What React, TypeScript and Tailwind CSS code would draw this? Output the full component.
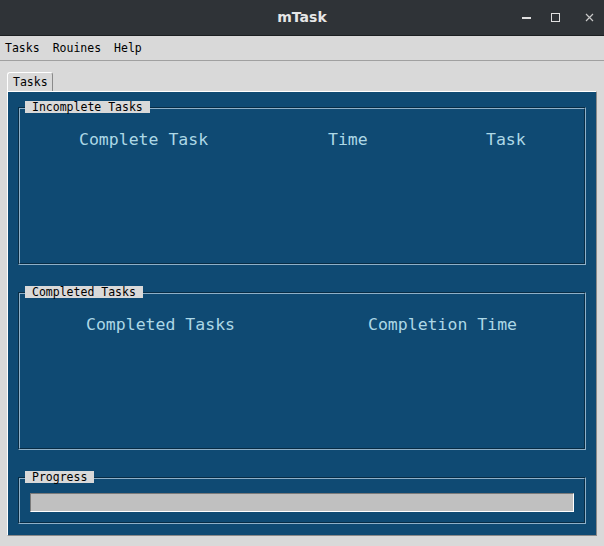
import type { ReactNode } from "react";

const mono = { fontFamily: '"DejaVu Sans Mono", "Liberation Mono", monospace' };

function Group({ label, className, children }: { label: string; className?: string; children?: ReactNode }) {
  // Tk-style groove frame with the label sitting on the top edge
  return (
    <div className={"relative border border-t-[#082c44] border-l-[#082c44] border-r-[#8fb0c8] border-b-[#8fb0c8] " + (className ?? "")}>
      <div className="absolute inset-0 border border-t-[#8fb0c8] border-l-[#8fb0c8] border-r-[#082c44] border-b-[#082c44] pointer-events-none" />
      <div
        className="absolute -top-[7px] left-[6px] h-[12px] bg-[#d9d9d9] px-[7px] text-[11.5px] leading-[12px] text-black"
        style={mono}
      >
        {label}
      </div>
      {children}
    </div>
  );
}

export default function App() {
  return (
    <div className="w-[604px] h-[546px] bg-[#d9d9d9] flex flex-col overflow-hidden">
      {/* Title bar */}
      <div className="relative h-[36px] shrink-0 bg-[#2f3337] border-b border-[#1c1f21] flex items-center justify-center">
        <span className="text-[14px] font-bold text-[#e6e6e6]" style={{ fontFamily: '"DejaVu Sans", sans-serif' }}>
          mTask
        </span>
        <div className="absolute right-0 top-0 h-full flex items-center">
          <div className="w-[9px] h-[1.5px] bg-[#e0e0e0] mr-[20px] mt-[1px]" />
          <div className="w-[9px] h-[9px] border-[1.5px] border-[#e0e0e0] mr-[25px]" />
          <svg width="9" height="9" viewBox="0 0 9 9" className="mr-[10px]">
            <path d="M1 1L8 8M8 1L1 8" stroke="#c8c8c8" strokeWidth="1.2" />
          </svg>
        </div>
      </div>

      {/* Menu bar */}
      <div className="h-[25px] shrink-0 border-b border-[#a0a0a0] flex items-center gap-[13px] pl-[5px] pt-[1px] text-[11.5px] text-black" style={mono}>
        <span>Tasks</span>
        <span>Rouines</span>
        <span>Help</span>
      </div>

      {/* Notebook */}
      <div className="flex-1 flex flex-col px-[7px] pt-[11px] pb-[10px]">
        <div className="flex">
          <div
            className="h-[19px] w-[46px] border border-b-0 border-t-white border-l-white border-r-[#8a8a8a] rounded-t-[3px] text-[11.5px] leading-[19px] pl-[5px] text-black"
            style={mono}
          >
            Tasks
          </div>
        </div>
        <div className="flex-1 bg-[#0f4a73] border border-t-white border-l-white border-r-[#8a8a8a] border-b-[#8a8a8a] pl-[10px] pr-[10px] pt-[15px] flex flex-col">
          <Group label="Incomplete Tasks" className="h-[158px]">
            <div className="grid grid-cols-[249px_158px_auto] pl-[60px] pt-[22px] text-[16.5px] leading-[20px] text-[#add8e6]" style={mono}>
              <span>Complete Task</span>
              <span>Time</span>
              <span>Task</span>
            </div>
          </Group>
          <Group label="Completed Tasks" className="h-[158px] mt-[27px]">
            <div className="grid grid-cols-[282px_auto] pl-[67px] pt-[22px] text-[16.5px] leading-[20px] text-[#add8e6]" style={mono}>
              <span>Completed Tasks</span>
              <span>Completion Time</span>
            </div>
          </Group>
          <Group label="Progress" className="h-[47px] mt-[27px]">
            <div className="ml-[11px] mr-[11px] mt-[15px] h-[19px] bg-[#c0c0c0] border border-t-[#7a7a7a] border-l-[#7a7a7a] border-r-white border-b-white" />
          </Group>
        </div>
      </div>
    </div>
  );
}
